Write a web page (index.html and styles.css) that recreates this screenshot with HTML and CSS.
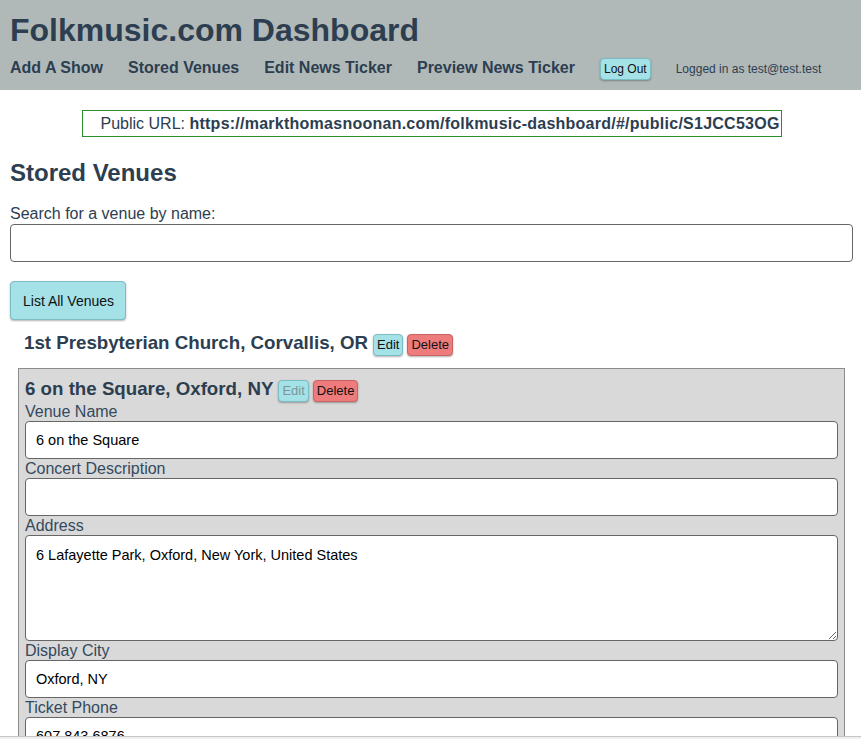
FILE: index.html
```html
<!DOCTYPE html>
<html lang="en">
<head>
<meta charset="utf-8">
<title>Folkmusic.com Dashboard</title>
<link rel="stylesheet" href="styles.css">
</head>
<body>
<header class="header">
  <h1 class="title">Folkmusic.com Dashboard</h1>
  <nav class="nav">
    <a class="nav-link">Add A Show</a>
    <a class="nav-link">Stored Venues</a>
    <a class="nav-link">Edit News Ticker</a>
    <a class="nav-link">Preview News Ticker</a>
    <button class="btn btn-logout">Log Out</button>
    <span class="user">Logged in as test@test.test</span>
  </nav>
</header>
<main class="main">
  <div class="public-url">Public URL: <strong class="url">https://markthomasnoonan.com/folkmusic-dashboard/#/public/S1JCC53OG</strong></div>
  <h2 class="page-title">Stored Venues</h2>
  <label class="search-label">Search for a venue by name:</label>
  <input class="text-input" type="text">
  <button class="btn btn-list">List All Venues</button>
  <div class="venue-list">
    <div class="venue">
      <div class="venue-head">
        <h3 class="venue-name">1st Presbyterian Church, Corvallis, OR</h3>
        <button class="btn btn-tiny">Edit</button>
        <button class="btn btn-tiny btn-danger">Delete</button>
      </div>
    </div>
    <div class="venue venue-open">
      <div class="venue-head">
        <h3 class="venue-name">6 on the Square, Oxford, NY</h3>
        <button class="btn btn-tiny btn-disabled" disabled>Edit</button>
        <button class="btn btn-tiny btn-danger">Delete</button>
      </div>
      <label class="field-label">Venue Name</label>
      <input class="text-input" type="text" value="6 on the Square">
      <label class="field-label">Concert Description</label>
      <input class="text-input" type="text" value="">
      <label class="field-label">Address</label>
      <textarea class="text-area">6 Lafayette Park, Oxford, New York, United States</textarea>
      <label class="field-label">Display City</label>
      <input class="text-input" type="text" value="Oxford, NY">
      <label class="field-label">Ticket Phone</label>
      <input class="text-input" type="text" value="607.843.6876">
      <label class="field-label">Website</label>
      <input class="text-input" type="text" value="">
    </div>
  </div>
</main>
<div class="hscroll"></div>
</body>
</html>
```

FILE: styles.css
```css
html, body {
  margin: 0;
  padding: 0;
}
body {
  font-family: "Liberation Sans", Arial, Helvetica, sans-serif;
  color: #2c3e50;
  background: #ffffff;
}
.header {
  background: #b1b9b8;
  height: 90px;
  box-sizing: border-box;
  padding: 0 10px;
  overflow: hidden;
}
.title {
  margin: 12px 0 0;
  font-size: 32px;
  line-height: 37px;
  font-weight: bold;
}
.nav {
  display: flex;
  align-items: baseline;
  gap: 25px;
  margin-top: 8px;
}
.nav-link {
  font-size: 16px;
  line-height: 22px;
  font-weight: bold;
  color: #2c3e50;
  text-decoration: none;
}
.btn {
  font-family: "Liberation Sans", Arial, Helvetica, sans-serif;
  color: #111;
  background: #a4e2e8;
  border: 1px solid #7cbcc3;
  border-radius: 4px;
  box-shadow: 0 1px 2px rgba(0, 0, 0, 0.3);
  cursor: pointer;
}
.btn-logout {
  font-size: 12px;
  line-height: 14px;
  padding: 3px 3px;
}
.user {
  font-size: 12px;
  color: #2c3e50;
}
.main {
  padding: 0 8px 40px 10px;
}
.public-url {
  width: 700px;
  box-sizing: border-box;
  margin: 20px auto 0;
  border: 1px solid #2a8f2a;
  padding: 3px 0 3px 18px;
  font-size: 16px;
  line-height: 19px;
  text-align: left;
  white-space: nowrap;
}
.url {
  letter-spacing: 0.25px;
}
.page-title {
  margin: 22px 0 17px;
  font-size: 24px;
  line-height: 28px;
}
.search-label {
  display: block;
  font-size: 16px;
  line-height: 20px;
}
.text-input {
  display: block;
  width: 100%;
  height: 38px;
  box-sizing: border-box;
  border: 1px solid #666;
  border-radius: 4px;
  padding: 0 10px;
  font-family: "Liberation Sans", Arial, Helvetica, sans-serif;
  font-size: 14.5px;
  color: #000;
  background: #fff;
  margin: 0;
}
.text-area {
  display: block;
  width: 100%;
  height: 106px;
  box-sizing: border-box;
  border: 1px solid #666;
  border-radius: 4px;
  padding: 11px 10px;
  font-family: "Liberation Sans", Arial, Helvetica, sans-serif;
  font-size: 14.5px;
  color: #000;
  background: #fff;
  margin: 0;
}
.btn-list {
  display: block;
  margin-top: 19px;
  height: 39px;
  padding: 0 11px 0 12px;
  font-size: 14px;
}
.venue-list {
  margin: 12px 8px 0;
}
.venue {
  padding: 0 6px;
}
.venue-head {
  display: flex;
  align-items: baseline;
  gap: 4px;
}
.venue-name {
  margin: 0 1px 0 0;
  font-size: 18.72px;
  line-height: 22px;
  font-weight: bold;
}
.btn-tiny {
  font-size: 13px;
  line-height: 16px;
  padding: 2px 3px;
}
.btn-danger {
  background: #ef7c7c;
  border-color: #c86363;
}
.btn-disabled {
  color: #7f9598;
  cursor: default;
}
.venue-open {
  margin-top: 12px;
  border: 1px solid #8c8c8c;
  background: #d9d9d9;
  padding: 9px 6px 0;
}
.field-label {
  display: block;
  font-size: 16px;
  line-height: 19px;
  color: #34495e;
}
.hscroll {
  position: fixed;
  left: 0;
  right: 0;
  bottom: 0;
  height: 2px;
  background: #f0f0f0;
  border-top: 1px solid #c6c6c6;
}
```
